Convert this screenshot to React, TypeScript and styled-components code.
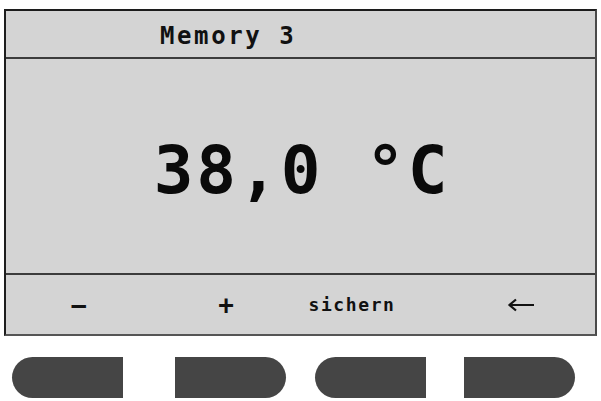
import styled, { createGlobalStyle } from 'styled-components';

const GlobalStyle = createGlobalStyle`
  html, body {
    margin: 0;
    padding: 0;
    background: #ffffff;
  }
  body {
    font-family: "DejaVu Sans Mono", "Liberation Mono", monospace;
  }
`;

const Page = styled.div`
  width: 601px;
  height: 401px;
  box-sizing: border-box;
  padding: 9px 4px 0 4px;
  display: flex;
  flex-direction: column;
`;

const Screen = styled.div`
  width: 593px;
  height: 327px;
  box-sizing: border-box;
  background: #d4d4d4;
  border-top: 2px solid #1c1c1c;
  border-left: 2px solid #1e1e1e;
  border-right: 2px solid #4a4a4a;
  border-bottom: 2px solid #555555;
  display: flex;
  flex-direction: column;
`;

const Header = styled.div`
  height: 48px;
  border-bottom: 2px solid #3c3c3c;
  display: flex;
  align-items: center;
  padding-left: 154px;
  padding-top: 3px;
  box-sizing: border-box;
`;

const Title = styled.span`
  font-weight: bold;
  font-size: 24px;
  letter-spacing: 2.6px;
  color: #111;
`;

const Main = styled.div`
  flex: 1;
  border-bottom: 2px solid #3c3c3c;
  display: flex;
  align-items: center;
  justify-content: center;
  padding-top: 8px;
`;

const Value = styled.span`
  font-weight: bold;
  font-size: 66px;
  letter-spacing: 2.6px;
  color: #0a0a0a;
  white-space: pre;
  margin-right: -3px;
`;

const Footer = styled.div`
  height: 59px;
  display: grid;
  grid-template-columns: repeat(4, 1fr);
  align-items: center;
`;

const Key = styled.div<{ $start?: boolean }>`
  display: flex;
  justify-content: ${p => (p.$start ? 'flex-start' : 'center')};
  padding-left: ${p => (p.$start ? '8px' : '0')};
  align-items: center;
  font-weight: bold;
  color: #111;
`;

const Label = styled.span<{ $size: number }>`
  font-size: ${p => p.$size}px;
  letter-spacing: 1.6px;
  line-height: 1;
`;

const Buttons = styled.div`
  display: flex;
  padding-top: 21px;
  padding-left: 8px;
`;

const HwButton = styled.div<{ $round: 'left' | 'right'; $gap: number }>`
  width: 111px;
  height: 41px;
  margin-left: ${p => p.$gap}px;
  background: #454545;
  border-radius: ${p => (p.$round === 'left' ? '21px 0 0 21px' : '0 21px 21px 0')};
`;

function BackArrow() {
  return (
    <svg width="28" height="14" viewBox="0 0 28 14">
      <path d="M27 7H3M9 1.5L2.5 7L9 12.5" stroke="#111" strokeWidth="2.2" fill="none" />
    </svg>
  );
}

export default function App() {
  return (
    <Page>
      <GlobalStyle />
      <Screen>
        <Header>
          <Title>Memory 3</Title>
        </Header>
        <Main>
          <Value>38,0 °C</Value>
        </Main>
        <Footer>
          <Key><Label $size={24}>–</Label></Key>
          <Key><Label $size={26}>+</Label></Key>
          <Key $start><Label $size={18}>sichern</Label></Key>
          <Key><BackArrow /></Key>
        </Footer>
      </Screen>
      <Buttons>
        <HwButton $round="left" $gap={0} />
        <HwButton $round="right" $gap={52} />
        <HwButton $round="left" $gap={29} />
        <HwButton $round="right" $gap={38} />
      </Buttons>
    </Page>
  );
}
